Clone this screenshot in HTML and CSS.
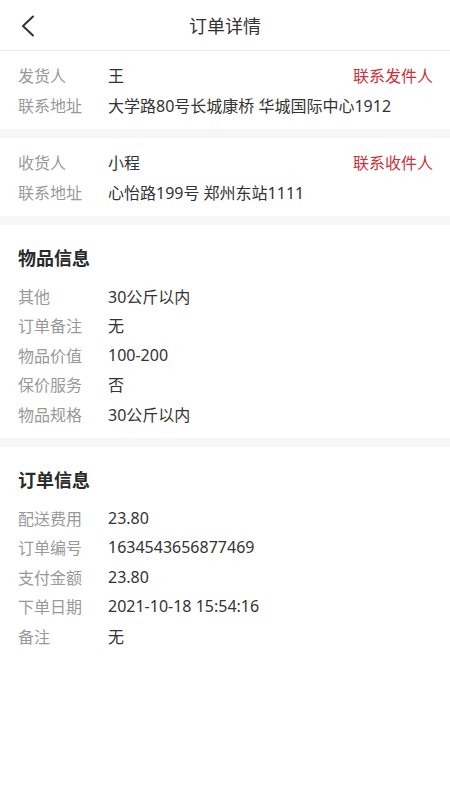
FILE: index.html
```html
<!DOCTYPE html>
<html lang="zh">
<head>
<meta charset="utf-8">
<title>订单详情</title>
<link rel="stylesheet" href="styles.css">
</head>
<body>
<div class="page">
  <header class="nav">
    <span class="back">
      <svg width="14" height="22" viewBox="0 0 14 22"><path d="M12 1.5 L2 11 L12 20.5" fill="none" stroke="#333" stroke-width="2" stroke-linecap="round" stroke-linejoin="round"/></svg>
    </span>
    <h1 class="nav-title">订单详情</h1>
  </header>

  <section class="card">
    <div class="row"><span class="label">发货人</span><span class="value">王</span><span class="link">联系发件人</span></div>
    <div class="row"><span class="label">联系地址</span><span class="value">大学路80号长城康桥 华城国际中心1912</span></div>
  </section>

  <section class="card">
    <div class="row"><span class="label">收货人</span><span class="value">小程</span><span class="link">联系收件人</span></div>
    <div class="row"><span class="label">联系地址</span><span class="value">心怡路199号 郑州东站1111</span></div>
  </section>

  <section class="card card-titled">
    <h2 class="card-title">物品信息</h2>
    <div class="row"><span class="label">其他</span><span class="value">30公斤以内</span></div>
    <div class="row"><span class="label">订单备注</span><span class="value">无</span></div>
    <div class="row"><span class="label">物品价值</span><span class="value">100-200</span></div>
    <div class="row"><span class="label">保价服务</span><span class="value">否</span></div>
    <div class="row"><span class="label">物品规格</span><span class="value">30公斤以内</span></div>
  </section>

  <section class="card card-titled card-last">
    <h2 class="card-title">订单信息</h2>
    <div class="row"><span class="label">配送费用</span><span class="value">23.80</span></div>
    <div class="row"><span class="label">订单编号</span><span class="value">1634543656877469</span></div>
    <div class="row"><span class="label">支付金额</span><span class="value">23.80</span></div>
    <div class="row"><span class="label">下单日期</span><span class="value">2021-10-18 15:54:16</span></div>
    <div class="row"><span class="label">备注</span><span class="value">无</span></div>
  </section>
</div>
</body>
</html>
```

FILE: styles.css
```css
html, body {
  margin: 0;
  padding: 0;
  background: #ffffff;
}
body {
  font-family: "Noto Sans", "Noto Sans CJK SC", sans-serif;
  color: #333;
}
.page {
  width: 450px;
  min-height: 800px;
  background: #fff;
}
.nav {
  height: 50px;
  border-bottom: 1px solid #ececec;
  display: flex;
  align-items: center;
  justify-content: center;
  position: relative;
}
.back {
  position: absolute;
  left: 21px;
  top: 15px;
  width: 14px;
  height: 22px;
  display: flex;
}
.nav-title {
  margin: 0;
  font-size: 18px;
  font-weight: 400;
  color: #333;
  line-height: 26px;
  padding-top: 2px;
}
.card {
  background: #fff;
  padding: 9.5px 17px 9.5px 18px;
  border-bottom: 9px solid #f6f6f6;
}
.card-titled {
  padding-top: 20px;
}
.card-last {
  border-bottom: none;
}
.card-title {
  margin: 0 0 10px 0;
  font-size: 18px;
  line-height: 26px;
  font-weight: 700;
  color: #2a2a2a;
}
.row {
  display: flex;
  align-items: center;
  height: 29.5px;
  font-size: 16px;
}
.label {
  width: 90px;
  flex: none;
  color: #999;
}
.value {
  flex: 1;
  color: #333;
  white-space: nowrap;
}
.link {
  flex: none;
  color: #c8323b;
}
```
